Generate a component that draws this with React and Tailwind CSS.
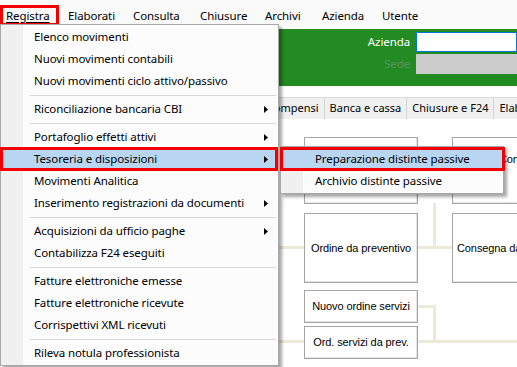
import React from "react";

const menuFont = "font-['Noto_Sans',sans-serif]";

const topMenu = [
  { label: "Registra", w: "w-[59px]", pl: "pl-[5px]", active: true },
  { label: "Elaborati", w: "w-[67px]", pl: "pl-[9px]" },
  { label: "Consulta", w: "w-[67px]", pl: "pl-[7px]" },
  { label: "Chiusure", w: "w-[65px]", pl: "pl-[7px]" },
  { label: "Archivi", w: "w-[57px]", pl: "pl-[7px]" },
  { label: "Azienda", w: "w-[60px]", pl: "pl-[7px]" },
  { label: "Utente", w: "w-[60px]", pl: "pl-[7px]" },
];

const registraItems = [
  { t: "Elenco movimenti" },
  { t: "Nuovi movimenti contabili" },
  { t: "Nuovi movimenti ciclo attivo/passivo" },
  "sep",
  { t: "Riconciliazione bancaria CBI", sub: true },
  "sep",
  { t: "Portafoglio effetti attivi", sub: true },
  { t: "Tesoreria e disposizioni", sub: true, active: true },
  { t: "Movimenti Analitica" },
  { t: "Inserimento registrazioni da documenti", sub: true },
  "sep",
  { t: "Acquisizioni da ufficio paghe", sub: true },
  { t: "Contabilizza F24 eseguiti" },
  "sep",
  { t: "Fatture elettroniche emesse" },
  { t: "Fatture elettroniche ricevute" },
  { t: "Corrispettivi XML ricevuti" },
  "sep",
  { t: "Rileva notula professionista" },
];

const tabs = ["Cespiti", "Compensi", "Banca e cassa", "Chiusure e F24", "Elaborati"];

const Arrow = () => (
  <svg width="4" height="7" viewBox="0 0 4 7" className="mr-[10px]">
    <polygon points="0,0 4,3.5 0,7" fill="#000" />
  </svg>
);

const Node = ({ className, children }) => (
  <div
    className={`absolute flex border border-[#a6a6a6] bg-white shadow-[inset_-1px_-1px_0_#e4e4e4] text-[11px] text-black whitespace-nowrap font-['Liberation_Sans',Arial,sans-serif] ${className}`}
  >
    {children}
  </div>
);

export default function App() {
  return (
    <div className={`relative w-[517px] h-[367px] overflow-hidden bg-white ${menuFont} text-[11.5px] tracking-[-0.1px] text-black`}>
      {/* barra menu */}
      <div className="flex h-[26px] items-center pt-[5px] bg-[#fafafa]">
        {topMenu.map((m) =>
          m.active ? (
            <div key={m.label} className={`${m.w} h-[21px] flex items-center border-[3px] border-[#f20000] pl-[3px]`}>
              <span className="underline underline-offset-2">{m.label}</span>
            </div>
          ) : (
            <div key={m.label} className={`${m.w} ${m.pl} leading-none`}>
              {m.label}
            </div>
          )
        )}
      </div>

      {/* intestazione verde */}
      <div className="mt-[3px] h-[57px] bg-[#228b22] flex flex-col items-end pt-[3px] gap-[2px]">
        <div className="flex items-center h-[20px]">
          <span className="text-white mr-[6px]">Azienda</span>
          <div className="w-[101px] h-[20px] bg-white border border-[#0078d7]" />
        </div>
        <div className="flex items-center h-[20px]">
          <span className="text-[#5f8f5f] mr-[6px]">Sede</span>
          <div className="w-[101px] h-[20px] bg-[#cccccc]" />
        </div>
      </div>

      {/* schede */}
      <div className="mt-[11px] h-[22px] bg-[#f0f0f0] border-t border-[#dadada] flex items-center pl-[215px] text-[11px] tracking-normal">
        {tabs.map((t) => (
          <div key={t} className="h-full flex items-center px-[5px] border-l border-[#d4d4d4] whitespace-nowrap">
            {t}
          </div>
        ))}
      </div>

      {/* diagramma */}
      <div className="relative h-[249px]">
        <div className="absolute left-[270px] top-[127px] w-[34px] h-[3px] bg-[#ece9d8]" />
        <div className="absolute left-[417px] top-[127px] w-[35px] h-[3px] bg-[#ece9d8]" />
        <div className="absolute left-[433px] top-[84px] w-[3px] h-[46px] bg-[#ece9d8]" />
        <div className="absolute left-[417px] top-[186px] w-[19px] h-[3px] bg-[#ece9d8]" />
        <div className="absolute left-[433px] top-[186px] w-[3px] h-[38px] bg-[#ece9d8]" />
        <div className="absolute left-[270px] top-[221px] w-[34px] h-[3px] bg-[#ece9d8]" />
        <div className="absolute left-[417px] top-[221px] w-[100px] h-[3px] bg-[#ece9d8]" />

        <Node className="left-[304px] top-[18px] w-[114px] h-[67px]" />
        <Node className="left-[452px] top-[18px] w-[140px] h-[67px] items-start pt-[13px] pl-[46px]">Consegna fornitore</Node>
        <Node className="left-[304px] top-[94px] w-[114px] h-[70px] items-center justify-center">Ordine da preventivo</Node>
        <Node className="left-[452px] top-[94px] w-[140px] h-[70px] items-center pl-[4px]">Consegna da ordine</Node>
        <Node className="left-[304px] top-[171px] w-[114px] h-[33px] items-center justify-center">Nuovo ordine servizi</Node>
        <Node className="left-[304px] top-[207px] w-[114px] h-[33px] items-center justify-center">Ord. servizi da prev.</Node>
      </div>

      {/* menu Registra */}
      <div className="absolute left-0 top-[24px] w-[279px] border border-[#a8a8a8] bg-[#fcfcfc] py-[1px] shadow-[3px_3px_3px_rgba(0,0,0,0.35)]">
        <div className="absolute left-0 top-0 bottom-0 w-[22px] bg-[#f0f0f0]" />
        {registraItems.map((it, i) =>
          it === "sep" ? (
            <div key={i} className="relative h-[6px] flex items-center pl-[29px] pr-[2px]">
              <div className="h-px w-full bg-[#d7d7d7]" />
            </div>
          ) : (
            <div
              key={i}
              className={`relative h-[22px] flex items-center pl-[33px] ${it.active ? "bg-[#b8d6f1]" : ""}`}
            >
              <span className="flex-1 whitespace-nowrap">{it.t}</span>
              {it.sub && <Arrow />}
              {it.active && (
                <div className="absolute -left-[1px] right-0 -top-[1px] -bottom-[1px] border-[3px] border-[#f20000]" />
              )}
            </div>
          )
        )}
      </div>

      {/* sottomenu Tesoreria */}
      <div className="absolute left-[280px] top-[146px] w-[224px] border border-[#a8a8a8] bg-[#fcfcfc] py-[1px] shadow-[3px_3px_3px_rgba(0,0,0,0.35)]">
        <div className="absolute left-0 top-0 bottom-0 w-[22px] bg-[#f0f0f0]" />
        <div className="relative h-[22px] flex items-center pl-[34px] bg-[#b8d6f1]">
          <span className="whitespace-nowrap">Preparazione distinte passive</span>
          <div className="absolute -left-[1px] -right-[2px] -top-[1px] -bottom-[1px] border-[3px] border-[#f20000]" />
        </div>
        <div className="relative h-[22px] flex items-center pl-[34px]">
          <span className="whitespace-nowrap">Archivio distinte passive</span>
        </div>
      </div>
    </div>
  );
}
